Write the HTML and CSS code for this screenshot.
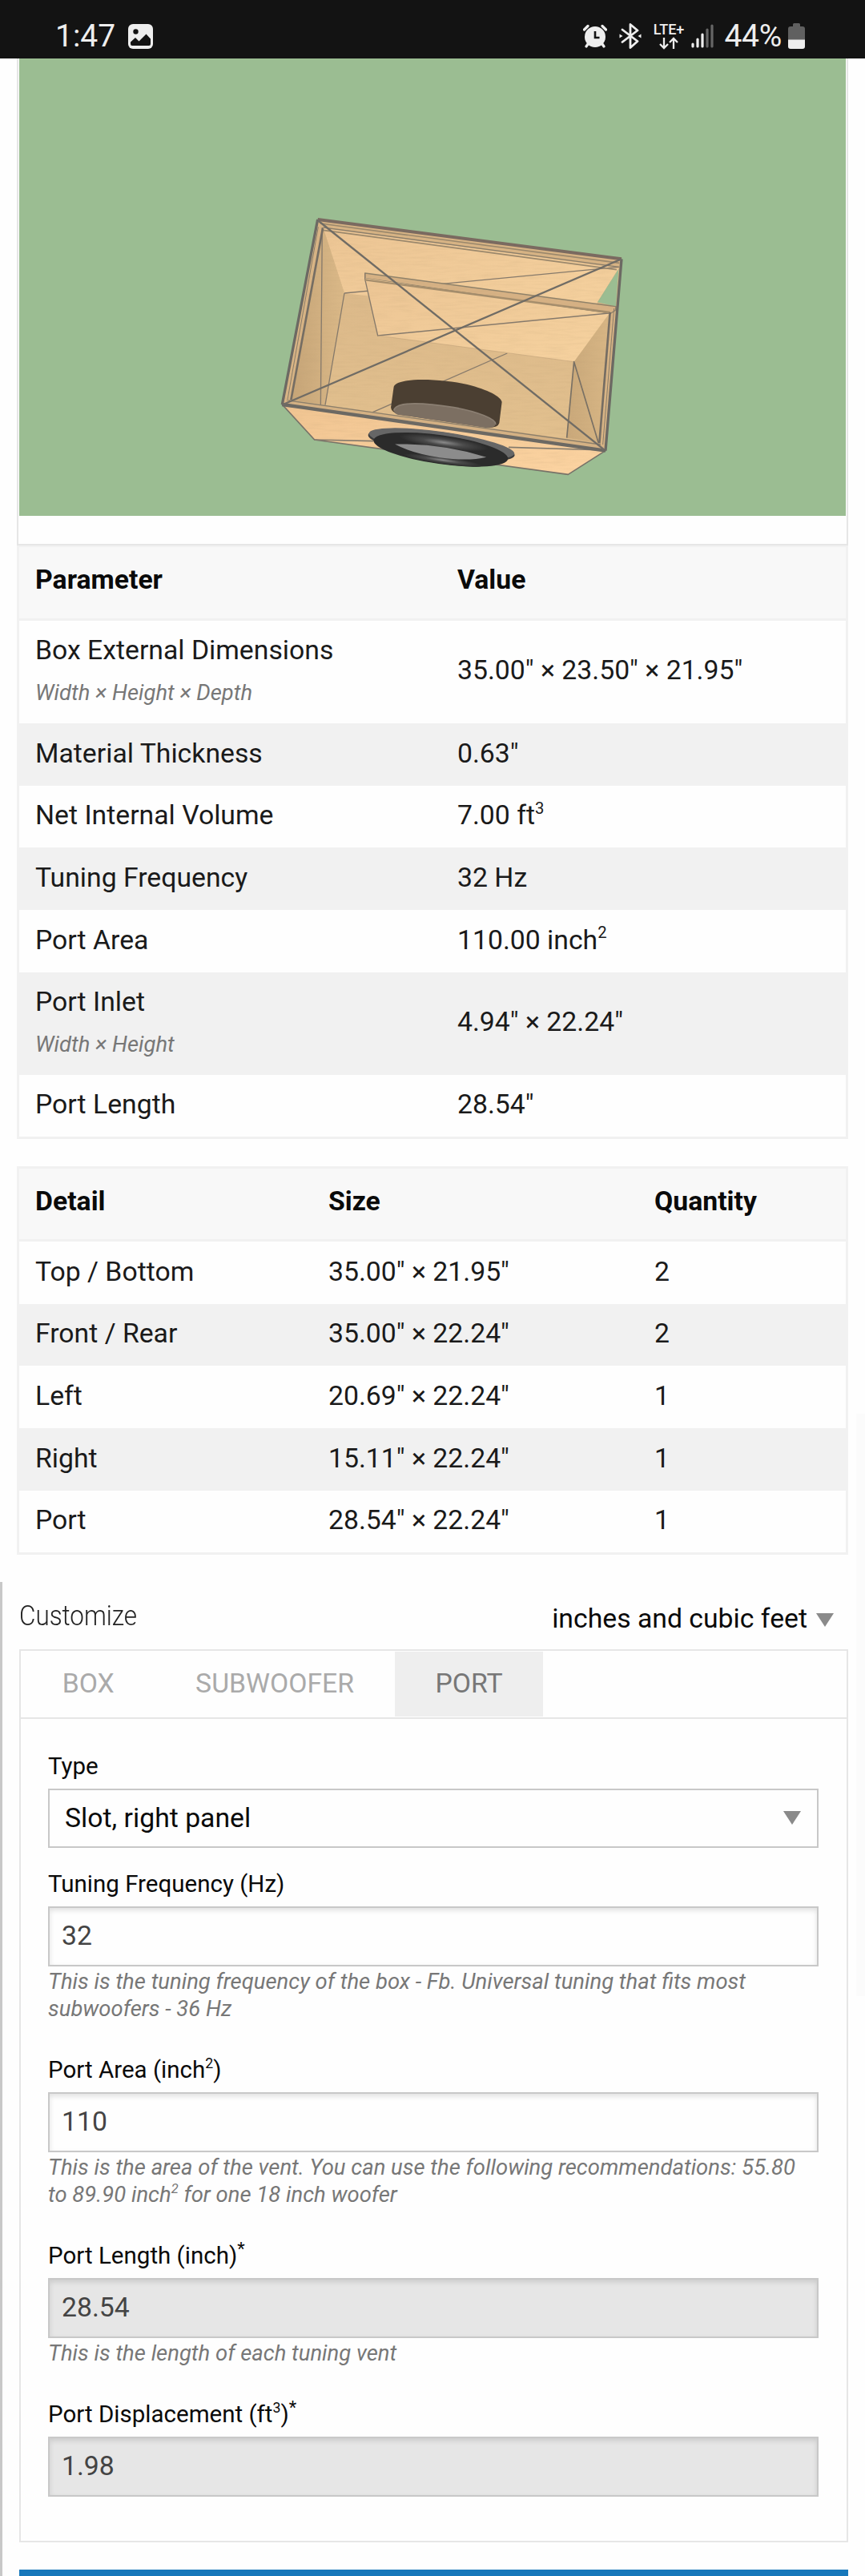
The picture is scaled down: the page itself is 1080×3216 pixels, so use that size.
FILE: index.html
```html
<!DOCTYPE html>
<html lang="en">

<head>
    <meta charset="UTF-8">
    <meta name="viewport" content="width=device-width, initial-scale=1.0">
    <title>Subwoofer Box Calculator</title>
    <link rel="stylesheet" href="styles.css">
</head>

<body>
    <div class="statusbar">
        <span class="clock">1:47</span>
        <svg class="icon-image" width="31" height="31" viewBox="0 0 31 31">
            <rect width="31" height="31" rx="6" fill="#eee" />
            <circle cx="9.5" cy="9.5" r="3.2" fill="#131313" />
            <path d="M3 22.5 L9 17 L13.5 21.5 L22.5 12.5 L28 18.5 V25 Q28 27 26 27 H5 Q3 27 3 25 Z" fill="#131313" />
        </svg>
        <div class="status-right">
            <svg width="30" height="30" viewBox="0 0 30 30">
                <path d="M1.5 7 L6 2.5 M28.5 7 L24 2.5 M6 25 L4 28 M24 25 L26 28" stroke="#eee" stroke-width="3.2" stroke-linecap="round" />
                <circle cx="15" cy="16" r="13" fill="#eee" />
                <path d="M15 9 V17 H20.5" fill="none" stroke="#131313" stroke-width="2.6" />
            </svg>
            <svg class="icon-bt" width="28" height="32" viewBox="0 0 28 32">
                <path d="M4 8 L23 22.5 L14 30.5 V1.5 L23 9 L4 23.5" fill="none" stroke="#eee" stroke-width="2.8" stroke-linejoin="round" stroke-linecap="round" />
                <path d="M0.5 13.5 L4.5 16 L0.5 18.5 Z M27.5 13.5 L23.5 16 L27.5 18.5 Z" fill="#eee" />
            </svg>
            <div class="lte">
                <span>LTE+</span>
                <svg width="26" height="16" viewBox="0 0 26 16">
                    <path d="M7 1 V14 M2 9 L7 14 L12 9 M19 15 V2 M14 7 L19 2 L24 7" fill="none" stroke="#eee" stroke-width="2.3" />
                </svg>
            </div>
            <svg class="icon-signal" width="28" height="30" viewBox="0 0 28 30">
                <path d="M2 25 V28 M8 19 V28 M14 13 V28" stroke="#eee" stroke-width="3.2" stroke-linecap="round" />
                <path d="M20 7 V28 M26 2 V28" stroke="#666" stroke-width="3.2" stroke-linecap="round" />
            </svg>
            <span class="percent">44%</span>
            <svg class="icon-battery" width="21" height="32" viewBox="0 0 21 32">
                <path d="M6 4 V1.5 Q6 0 7.5 0 H13.5 Q15 0 15 1.5 V4 H18 Q21 4 21 7 V21 H0 V7 Q0 4 3 4 Z" fill="#606060" />
                <path d="M0 20.5 H21 V29 Q21 32 18 32 H3 Q0 32 0 29 Z" fill="#eee" />
            </svg>
        </div>
    </div>

    <div class="viewer">
        <svg class="scene" width="1032" height="571" viewBox="0 0 1032 571">
            <defs>
                <linearGradient id="rear" x1="0" y1="0" x2="1" y2="1">
                    <stop offset="0" stop-color="#ecc594" />
                    <stop offset="1" stop-color="#f6d29f" />
                </linearGradient>
                <linearGradient id="floor" x1="0" y1="0" x2="0" y2="1">
                    <stop offset="0" stop-color="#d9b688" />
                    <stop offset="1" stop-color="#e2c08e" />
                </linearGradient>
                <linearGradient id="left" x1="0" y1="0" x2="1" y2="0">
                    <stop offset="0" stop-color="#c5a477" />
                    <stop offset="1" stop-color="#dbb988" />
                </linearGradient>
                <linearGradient id="right" x1="0" y1="0" x2="1" y2="0">
                    <stop offset="0" stop-color="#c9a87a" />
                    <stop offset="1" stop-color="#d8b685" />
                </linearGradient>
                <linearGradient id="front" x1="0" y1="0" x2="1" y2="1">
                    <stop offset="0" stop-color="#f0c491" />
                    <stop offset="1" stop-color="#fcd4a2" />
                </linearGradient>
                <radialGradient id="rubber">
                    <stop offset="0" stop-color="#8a8a8a" />
                    <stop offset="0.45" stop-color="#4a4a4a" />
                    <stop offset="1" stop-color="#2a2a2a" />
                </radialGradient>
                <filter id="grain" x="0" y="0" width="1" height="1">
                    <feTurbulence type="fractalNoise" baseFrequency="0.012 0.12" numOctaves="3" seed="4" />
                    <feColorMatrix values="0 0 0 0 0.5  0 0 0 0 0.35  0 0 0 0 0.18  0.9 0 0 0 -0.36" />
                    <feComposite in2="SourceGraphic" operator="in" />
                </filter>
            </defs>
            <g transform="translate(296 167) scale(0.33333)" stroke-linejoin="round">
                <!-- front board with the cutout -->
                <path d="M97 795 L1308 968 L1168 1057 L218 927 Z" fill="url(#front)" stroke="#777268" stroke-width="5" />
                <path d="M218 927 L440 932 M945 955 L1308 966" stroke="#857b6d" stroke-width="5" />
                <!-- shell -->
                <path d="M230 102 L1368 250 L1308 968 L97 795 Z" fill="#d8b485" />
                <path d="M250 132 L330 378 L1190 500 L1325 450 L1282 940 L130 780 Z" fill="url(#floor)" />
                <path d="M250 132 L1357 285 L1230 490 L330 378 Z" fill="url(#rear)" />
                <path d="M250 132 L330 378 L258 797 L130 778 Z" fill="url(#left)" />
                <path d="M1357 287 L1347 428 L1278 412 Z" fill="#9bbd92" />
                <path d="M330 378 L1357 280 M330 378 L258 797 M247 132 L241 797 M436 824 L940 603" fill="none" stroke="#85796b" stroke-width="4" />
                <!-- port board -->
                <path d="M407 303 L1347 428 L1345 442 L1325 455 L407 322 Z" fill="#d6b184" stroke="#8d8069" stroke-width="4" />
                <path d="M407 322 L1325 455 L1190 635 L455 537 Z" fill="url(#rear)" />
                <path d="M407 303 L407 325 L455 537 L1320 453" fill="none" stroke="#85796b" stroke-width="4" />
                <path d="M407 328 L1325 450" stroke="#a48d6c" stroke-width="7" />
                <path d="M455 537 L1190 635" stroke="#c4a57b" stroke-width="2" />
                <path d="M1325 450 L1190 635 L1163 920 L1282 940 Z" fill="url(#right)" />
                <path d="M1163 920 L1190 635 L1282 940" fill="none" stroke="#776f64" stroke-width="5" />
                <path d="M230 102 L1368 250 L1308 968 L1168 1057 L218 927 L97 795 Z" fill="#000" filter="url(#grain)" opacity="0.32" />
                <path d="M1353 310 L1345 425 L1283 411 Z" fill="#9bbd92" />
                <!-- magnet -->
                <path d="M515 728 C530 690 700 700 790 720 C870 740 915 765 920 785 L910 865 Q905 882 870 882 L530 832 Q500 820 505 800 Z" fill="#4b3f32" />
                <path d="M515 818 C520 780 640 790 740 806 C830 822 900 850 896 870 Q893 884 860 882 L530 833 Q517 828 515 818 Z" fill="#7c6f62" />
                <path d="M515 818 C520 780 640 790 740 806 C830 822 900 850 896 870" fill="none" stroke="#8b7f72" stroke-width="5" />
                <!-- rim of the open side -->
                <path d="M105 782 L520 840 L900 892 L1300 948 L1308 968 L97 795 Z" fill="#d4b184" />
                <path d="M120 780 L1290 945 M250 132 L1360 280" stroke="#8c7f6b" stroke-width="4" />
                <path d="M240 117 L1360 265 M250 142 L1350 290" stroke="#9b886c" stroke-width="5" />
                <path d="M97 795 L1308 968" stroke="#6c6963" stroke-width="13" />
                <path d="M230 102 L1368 250" stroke="#7a6a60" stroke-width="12" />
                <path d="M230 102 L97 795 M1368 250 L1308 968" stroke="#6c6963" stroke-width="10" />
                <path d="M249 135 L130 778 M1325 450 L1285 940" stroke="#756d63" stroke-width="8" />
                <path d="M232 130 L116 782 M1340 435 L1298 945" stroke="#897c69" stroke-width="3" />
                <path d="M230 105 L1300 962 M1368 250 L100 795" stroke="#706c65" stroke-width="7" />
                <!-- cone -->
                <g transform="rotate(8 693 950)">
                    <ellipse cx="693" cy="947" rx="277" ry="48" fill="#3c3c3c" />
                    <ellipse cx="693" cy="941" rx="275" ry="44" fill="#666" />
                    <ellipse cx="693" cy="964" rx="254" ry="54" fill="#2b2b2b" />
                    <ellipse cx="700" cy="936" rx="170" ry="24" fill="url(#rubber)" />
                    <ellipse cx="705" cy="1002" rx="150" ry="14" fill="url(#rubber)" />
                    <path d="M520 968 Q690 940 866 968 Q800 994 693 994 Q590 994 520 968 Z" fill="#8c8c8c" />
                </g>
            </g>
        </svg>
    </div>

    <table class="result params">
        <thead>
            <tr>
                <th class="col-param">Parameter</th>
                <th>Value</th>
            </tr>
        </thead>
        <tbody>
            <tr class="tall">
                <td>Box External Dimensions<small>Width × Height × Depth</small></td>
                <td>35.00" × 23.50" × 21.95"</td>
            </tr>
            <tr>
                <td>Material Thickness</td>
                <td>0.63"</td>
            </tr>
            <tr class="short">
                <td>Net Internal Volume</td>
                <td>7.00 ft<sup>3</sup></td>
            </tr>
            <tr>
                <td>Tuning Frequency</td>
                <td>32 Hz</td>
            </tr>
            <tr>
                <td>Port Area</td>
                <td>110.00 inch<sup>2</sup></td>
            </tr>
            <tr class="tall">
                <td>Port Inlet<small>Width × Height</small></td>
                <td>4.94" × 22.24"</td>
            </tr>
            <tr class="short">
                <td>Port Length</td>
                <td>28.54"</td>
            </tr>
        </tbody>
    </table>

    <table class="result details">
        <thead>
            <tr>
                <th class="col-detail">Detail</th>
                <th class="col-size">Size</th>
                <th>Quantity</th>
            </tr>
        </thead>
        <tbody>
            <tr>
                <td>Top / Bottom</td>
                <td>35.00" × 21.95"</td>
                <td>2</td>
            </tr>
            <tr class="short">
                <td>Front / Rear</td>
                <td>35.00" × 22.24"</td>
                <td>2</td>
            </tr>
            <tr>
                <td>Left</td>
                <td>20.69" × 22.24"</td>
                <td>1</td>
            </tr>
            <tr>
                <td>Right</td>
                <td>15.11" × 22.24"</td>
                <td>1</td>
            </tr>
            <tr class="short">
                <td>Port</td>
                <td>28.54" × 22.24"</td>
                <td>1</td>
            </tr>
        </tbody>
    </table>

    <div class="customize">
        <div class="customize-head">
            <h4>Customize</h4>
            <div class="units">inches and cubic feet <i class="arrow"></i></div>
        </div>
        <div class="tabs">
            <a class="tab">BOX</a>
            <a class="tab">SUBWOOFER</a>
            <a class="tab active">PORT</a>
        </div>
        <div class="panel">
            <label class="label">Type</label>
            <div class="select">Slot, right panel <i class="arrow"></i></div>

            <label class="label" for="freq">Tuning Frequency (Hz)</label>
            <input class="input" id="freq" type="text" value="32">
            <p class="hint">This is the tuning frequency of the box - Fb. Universal tuning that fits most subwoofers - 36 Hz</p>

            <label class="label" for="area">Port Area (inch<sup>2</sup>)</label>
            <input class="input" id="area" type="text" value="110">
            <p class="hint">This is the area of the vent. You can use the following recommendations: 55.80 to 89.90 inch<sup>2</sup> for one 18 inch woofer</p>

            <label class="label" for="length">Port Length (inch)<span class="star">*</span></label>
            <input class="input" id="length" type="text" value="28.54" readonly>
            <p class="hint">This is the length of each tuning vent</p>

            <label class="label" for="disp">Port Displacement (ft<sup>3</sup>)<span class="star">*</span></label>
            <input class="input" id="disp" type="text" value="1.98" readonly>
        </div>
        <div class="button"></div>
    </div>
    <div class="scrollbar"></div>
</body>

</html>
```

FILE: styles.css
```css
* {
    margin: 0;
    padding: 0;
    box-sizing: border-box;
}
body {
    position: relative;
    width: 1080px;
    height: 3216px;
    overflow: hidden;
    background-color: #fefefe;
    font-family: Roboto, "Liberation Sans", sans-serif;
    font-size: 33.75px;
    color: #0a0a0a;
}
sup {
    font-size: 60%;
    line-height: 0;
    position: relative;
    top: -0.65em;
    vertical-align: baseline;
}

/* phone status bar */
.statusbar {
    height: 73px;
    background-color: #131313;
    color: #eee;
    display: flex;
    align-items: center;
    padding: 17px 75px 0 69px;
    font-size: 39px;
}
.icon-image {
    margin-left: 16px;
}
.status-right {
    margin-left: auto;
    display: flex;
    align-items: center;
}
.icon-bt {
    margin-left: 15px;
}
.lte {
    margin-left: 13px;
    width: 41px;
    display: flex;
    flex-direction: column;
    align-items: center;
    font-size: 18px;
    font-weight: 500;
    line-height: 18px;
}
.icon-signal {
    margin-left: 8px;
}
.percent {
    margin-left: 13px;
    letter-spacing: -0.3px;
}
.icon-battery {
    margin-left: 8px;
}

/* 3d view */
.viewer {
    width: 1038px;
    height: 608px;
    margin-left: 21px;
    padding: 0 1px;
    border: 2px solid #e6e6e6;
    border-top: none;
}
.scene {
    display: block;
    background-color: #9bbd92;
}

/* result tables */
.result {
    width: 1038px;
    margin-left: 21px;
    border: 3px solid #f1f1f1;
    border-collapse: separate;
    border-spacing: 0;
    table-layout: fixed;
    color: #1a1a1a;
}
.params {
    border-top-width: 2px;
}
.details {
    margin-top: 34px;
}
.result th {
    height: 92px;
    padding: 0 19px 8px 20px;
    background-color: #f8f8f8;
    border-bottom: 3px solid #f1f1f1;
    text-align: left;
    font-weight: 700;
    color: #0a0a0a;
}
.details th {
    height: 91px;
}
.result td {
    height: 78px;
    padding: 0 19px 3px 20px;
    line-height: 40px;
    vertical-align: middle;
}
.result .short td {
    height: 77px;
}
.result .tall td {
    height: 128px;
    padding-bottom: 4px;
}
.result tbody tr:nth-child(even) {
    background-color: #f1f1f1;
}
.result small {
    display: block;
    margin-top: 16px;
    font-size: 27.4px;
    line-height: 34px;
    font-style: italic;
    color: #777;
}
.col-param {
    width: 527px;
}
.col-detail {
    width: 366px;
}
.col-size {
    width: 407px;
}

/* customize form */
.customize {
    margin-top: 34px;
    height: 1241px;
    padding: 0 21px;
    border-left: 3px solid #c8c8c8;
}
.customize-head {
    height: 84px;
    display: flex;
    justify-content: space-between;
}
.customize h4 {
    font-size: 34.5px;
    font-weight: 300;
    line-height: 84px;
    transform: scaleX(0.91);
    transform-origin: 0 0;
    color: #222;
}
.units {
    display: flex;
    align-items: center;
    padding: 6px 18px 0 0;
}
.arrow {
    border-left: 11px solid transparent;
    border-right: 11px solid transparent;
    border-top: 17px solid #8a8a8a;
    margin: 5px 0 0 11px;
}
.tabs {
    width: 1035px;
    height: 87px;
    padding: 1px 0 1px 1px;
    border: 2px solid #e6e6e6;
    display: flex;
}
.tab {
    padding: 0 50.7px;
    line-height: 80px;
    color: #aaa;
}
.tab.active {
    background-color: #eee;
    color: #777;
}
.panel {
    width: 1035px;
    height: 1028px;
    padding: 32px 35px 0 34px;
    border: 2px solid #e6e6e6;
    border-top: none;
}
.label {
    display: block;
    height: 55px;
    font-size: 29.53px;
    line-height: 55px;
}
.select {
    height: 74px;
    margin-bottom: 18px;
    padding: 0 20px 2px 19px;
    border: 2px solid #c8c8c8;
    display: flex;
    justify-content: space-between;
    align-items: center;
}
.select .arrow {
    margin-top: 0;
}
.input {
    display: block;
    width: 100%;
    height: 75px;
    padding: 0 15px 2px;
    border: 2px solid #c8c8c8;
    background-color: #fefefe;
    box-shadow: inset 0 3px 6px rgba(10, 10, 10, 0.12);
    font-family: inherit;
    font-size: 33.75px;
    color: #444;
    outline: none;
}
.input:read-only {
    background-color: #e6e6e6;
}
.hint {
    margin: 2px 0 32px;
    padding-right: 20px;
    font-size: 27.45px;
    line-height: 34px;
    font-style: italic;
    color: #777;
}
.star {
    position: relative;
    top: -11px;
    font-size: 22px;
    line-height: 0;
}
.button {
    width: 1035px;
    height: 8px;
    margin-top: 34px;
    background-color: #1878bb;
}
.scrollbar {
    position: absolute;
    top: 1765px;
    right: 0;
    width: 11px;
    height: 727px;
    background-color: #fbfbfb;
}
```
